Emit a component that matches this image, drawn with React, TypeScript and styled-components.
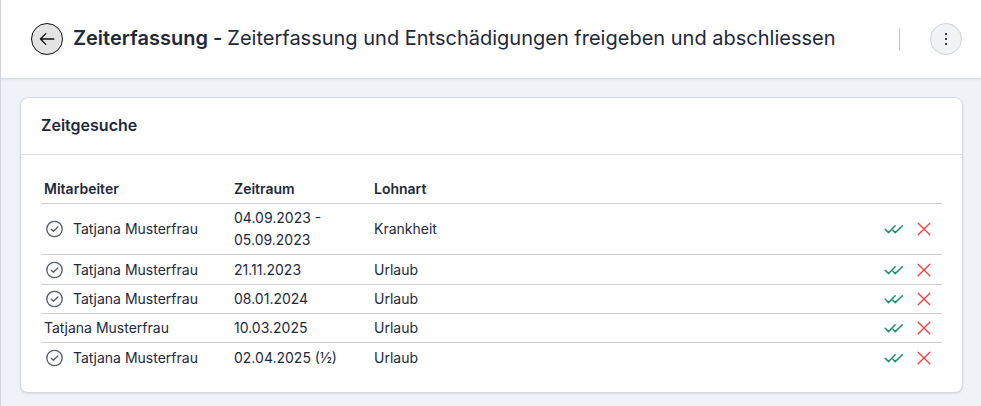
import React from "react";
import styled, { createGlobalStyle } from "styled-components";

const GlobalStyle = createGlobalStyle`
  *, *::before, *::after { box-sizing: border-box; }
  body {
    margin: 0;
    background: #eff2f7;
    color: #1e293b;
    font-family: Inter, "Liberation Sans", sans-serif;
    font-size: 14px;
    line-height: 22px;
  }
`;

const Page = styled.div`
  min-height: 100vh;
  border-left: 1px solid #d3d6dc;
`;

const Header = styled.header`
  display: flex;
  align-items: center;
  padding: 23px 19px 23px 30px;
  background: #fff;
  border-bottom: 1px solid #d9dce1;
  box-shadow: 0 1px 2px rgba(0, 0, 0, 0.06);
`;

const RoundButton = styled.button<{ $active?: boolean }>`
  display: flex;
  flex: none;
  align-items: center;
  justify-content: center;
  width: 32px;
  height: 32px;
  padding: 0;
  border: 1px solid ${(p) => (p.$active ? "#111" : "#ced2d9")};
  border-radius: 50%;
  background: ${(p) => (p.$active ? "#e3e3e3" : "#f1f2f4")};
  color: ${(p) => (p.$active ? "#111" : "#374151")};
  cursor: pointer;
`;

const Title = styled.h1`
  flex: 1;
  margin: 0 0 0 10px;
  padding-bottom: 2px;
  font-size: 20px;
  line-height: 30px;
  font-weight: 400;
`;

const Strong = styled.strong`
  font-weight: 600;
`;

const Divider = styled.span`
  width: 1px;
  height: 23px;
  margin-right: 30px;
  background: #c3c7ce;
`;

const Main = styled.main`
  padding: 18px 18px 13px 19px;
`;

const Card = styled.section`
  overflow: hidden;
  border: 1px solid #d5d9df;
  border-radius: 8px;
  background: #fff;
  box-shadow: 0 1px 2px rgba(0, 0, 0, 0.1);
`;

const CardTitle = styled.h2`
  margin: 0;
  padding: 15px 20px 17px;
  border-bottom: 1px solid #d9dce1;
  font-size: 16px;
  line-height: 24px;
  font-weight: 600;
`;

const CardBody = styled.div`
  padding: 20px;
`;

const Table = styled.table`
  width: 100%;
  table-layout: fixed;
  border-collapse: separate;
  border-spacing: 0;
`;

const HeadCell = styled.th<{ $width?: number }>`
  width: ${(p) => (p.$width ? `${p.$width}px` : "auto")};
  padding: 3px;
  border-bottom: 1px solid #cbcfd4;
  text-align: left;
  font-weight: 600;
`;

const Cell = styled.td`
  padding: 3px;
  vertical-align: middle;
`;

const Row = styled.tr`
  &:not(:last-child) > td { border-bottom: 1px solid #cbcfd4; }
  &:nth-child(2) > td,
  &:last-child > td { padding-top: 4px; }
`;

const Employee = styled.div`
  display: flex;
  align-items: center;
  gap: 9px;
`;

const Actions = styled.div`
  display: flex;
  align-items: center;
  justify-content: flex-end;
  gap: 11px;
  padding-right: 7px;
`;

const ActionButton = styled.button<{ $tone: string }>`
  display: flex;
  padding: 0;
  border: 0;
  background: none;
  color: ${(p) => p.$tone};
  cursor: pointer;
`;

const Icon = styled.svg`
  display: block;
  flex: none;
  fill: none;
  stroke: currentColor;
  stroke-linecap: round;
  stroke-linejoin: round;
`;

const StatusIcon = styled(Icon)`
  color: #565d68;
`;

const ArrowLeft = () => (
  <Icon width="18" height="18" viewBox="0 0 18 18" strokeWidth="1.3" aria-hidden="true">
    <path d="M15.8 9H2.4M7.8 3.6L2.4 9l5.4 5.4" />
  </Icon>
);

const Dots = () => (
  <Icon width="14" height="14" viewBox="0 0 14 14" aria-hidden="true">
    <path d="M6 1h2v2H6zM6 6h2v2H6zM6 11h2v2H6z" fill="currentColor" stroke="none" />
  </Icon>
);

const CircleCheck = () => (
  <StatusIcon width="20" height="20" viewBox="0 0 20 20" strokeWidth="1.3" role="img" aria-label="Bestätigt">
    <circle cx="10.5" cy="10" r="7.7" />
    <path d="M7.2 10.2l2.3 2.1 4.3-4.3" />
  </StatusIcon>
);

const DoubleCheck = () => (
  <Icon width="22" height="16" viewBox="0 0 22 16" strokeWidth="1.5" aria-hidden="true">
    <path d="M2.2 8.2l3.4 3.4L12.2 4.8M10 9.4l2.2 2.2L19.4 4.8" />
  </Icon>
);

const Cross = () => (
  <Icon width="16" height="16" viewBox="0 0 16 16" strokeWidth="1.4" aria-hidden="true">
    <path d="M2.2 2.2l11.6 11.6M13.8 2.2L2.2 13.8" />
  </Icon>
);

interface TimeRequest {
  name: string;
  period: string;
  type: string;
  confirmed: boolean;
}

const requests: TimeRequest[] = [
  { name: "Tatjana Musterfrau", period: "04.09.2023 - 05.09.2023", type: "Krankheit", confirmed: true },
  { name: "Tatjana Musterfrau", period: "21.11.2023", type: "Urlaub", confirmed: true },
  { name: "Tatjana Musterfrau", period: "08.01.2024", type: "Urlaub", confirmed: true },
  { name: "Tatjana Musterfrau", period: "10.03.2025", type: "Urlaub", confirmed: false },
  { name: "Tatjana Musterfrau", period: "02.04.2025 (½)", type: "Urlaub", confirmed: true },
];

export default function App() {
  return (
    <Page>
      <GlobalStyle />
      <Header>
        <RoundButton $active aria-label="Zurück">
          <ArrowLeft />
        </RoundButton>
        <Title>
          <Strong>Zeiterfassung - </Strong>Zeiterfassung und Entschädigungen freigeben und abschliessen
        </Title>
        <Divider />
        <RoundButton aria-label="Weitere Optionen">
          <Dots />
        </RoundButton>
      </Header>
      <Main>
        <Card>
          <CardTitle>Zeitgesuche</CardTitle>
          <CardBody>
            <Table>
              <thead>
                <tr>
                  <HeadCell $width={190}>Mitarbeiter</HeadCell>
                  <HeadCell $width={140}>Zeitraum</HeadCell>
                  <HeadCell>Lohnart</HeadCell>
                  <HeadCell $width={80} aria-label="Aktionen" />
                </tr>
              </thead>
              <tbody>
                {requests.map((r) => (
                  <Row key={r.period}>
                    <Cell>
                      <Employee>
                        {r.confirmed && <CircleCheck />}
                        {r.name}
                      </Employee>
                    </Cell>
                    <Cell>{r.period}</Cell>
                    <Cell>{r.type}</Cell>
                    <Cell>
                      <Actions>
                        <ActionButton $tone="#1a936a" aria-label="Freigeben">
                          <DoubleCheck />
                        </ActionButton>
                        <ActionButton $tone="#ef4444" aria-label="Ablehnen">
                          <Cross />
                        </ActionButton>
                      </Actions>
                    </Cell>
                  </Row>
                ))}
              </tbody>
            </Table>
          </CardBody>
        </Card>
      </Main>
    </Page>
  );
}
